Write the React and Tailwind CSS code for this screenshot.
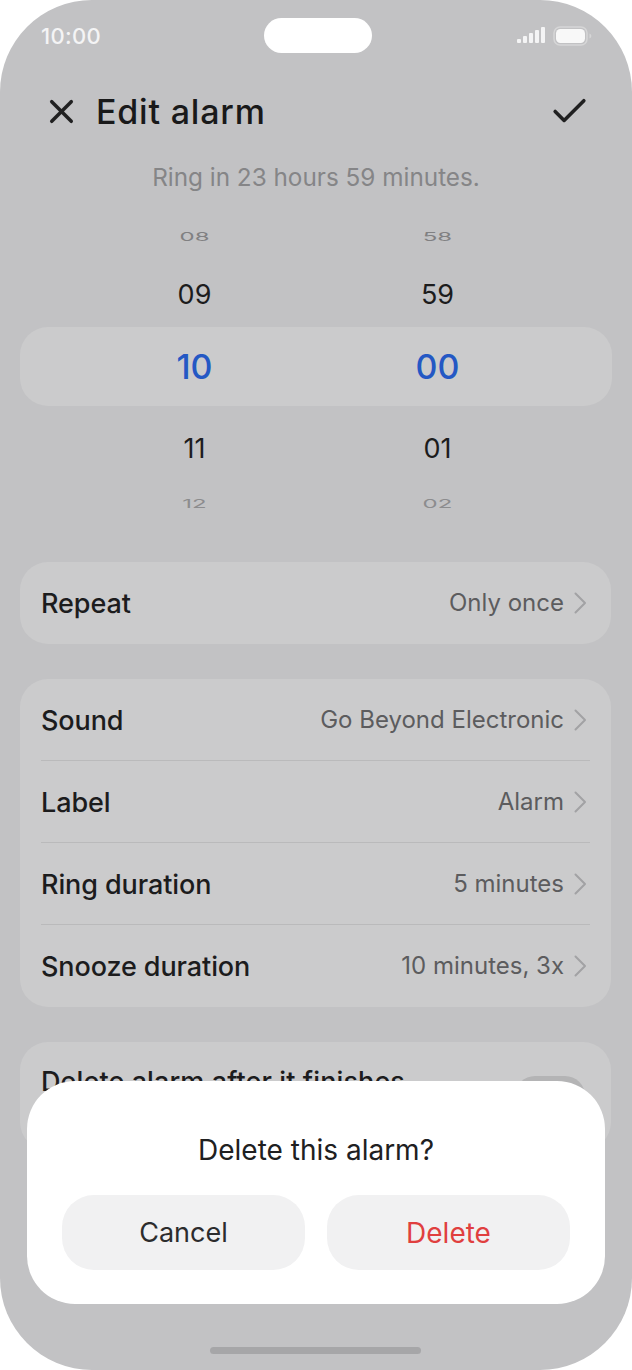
import { X, Check } from "lucide-react"

const font = { fontFamily: '"Inter", "Noto Sans", sans-serif' }

function StatusBar() {
    return (
        <div className="flex h-[71px] items-center justify-between pl-[41px] pr-[40px]">
            <span className="w-[120px] text-[22px] font-medium leading-none tracking-[0.3px] text-[#f4f4f5]">10:00</span>
            <div className="ml-[2px] h-[35px] w-[108px] rounded-full bg-white" />
            <div className="flex w-[120px] items-center justify-end gap-[8px]">
                <svg width="28" height="17" viewBox="0 0 28 17" fill="#f4f4f5">
                    <rect x="0" y="12" width="4" height="4" rx="1" />
                    <rect x="6" y="9" width="4" height="7" rx="1" />
                    <rect x="12" y="6" width="4" height="10" rx="1" />
                    <rect x="18" y="3" width="4" height="13" rx="1" />
                    <rect x="24" y="0" width="4" height="16" rx="1" />
                </svg>
                <svg width="39" height="20" viewBox="0 0 39 20" fill="none">
                    <rect x="1" y="1" width="33" height="18" rx="6" stroke="#d6d6d7" strokeWidth="1.5" />
                    <rect x="3" y="3" width="29" height="14" rx="4.5" fill="#f8f8f8" />
                    <path d="M36.5 7.5c1.2.4 1.8 1.3 1.8 2.5s-.6 2.1-1.8 2.5z" fill="#d6d6d7" />
                </svg>
            </div>
        </div>
    )
}

function PickerRow({ left, right, className }) {
    return (
        <div className={`flex pl-[73px] ${className}`}>
            <span className="w-[243px] text-center">{left}</span>
            <span className="w-[243px] text-center">{right}</span>
        </div>
    )
}

function Row({ label, value }) {
    return (
        <div className="flex h-[82px] items-center justify-between">
            <span className="pt-[3px] text-[27px] font-medium tracking-[-0.1px] text-[#1c1c1d]">{label}</span>
            <span className="flex items-center gap-[10px] text-[24px] text-[#5c5c5e]">
                {value}
                <svg width="13" height="22" viewBox="0 0 13 22" fill="none" className="mr-[3px]">
                    <path d="M1.5 1.5 11 11l-9.5 9.5" stroke="#a2a2a4" strokeWidth="2" strokeLinecap="round" strokeLinejoin="round" />
                </svg>
            </span>
        </div>
    )
}

export default function App() {
    return (
        <div className="relative h-[1370px] w-[632px] overflow-hidden bg-white" style={font}>
            <div className="h-full overflow-hidden rounded-[92px] bg-[#c2c2c4]">
                <StatusBar />

                <div className="mt-[14px] flex h-[52px] items-center pl-[42px] pr-[41px]">
                    <X size={39} strokeWidth={2.2} className="text-[#202021]" />
                    <h1 className="ml-[15px] flex-1 text-[34px] font-medium tracking-[0.8px] text-[#19191a]">Edit alarm</h1>
                    <Check size={43} strokeWidth={2} className="text-[#202021]" />
                </div>

                <p className="mt-[25px] text-center text-[24.3px] leading-[30px] text-[#858587]">Ring in 23 hours 59 minutes.</p>

                <div className="mt-[35px] text-[#1c1c1d]">
                    <PickerRow left="08" right="58" className="h-[20px] origin-center scale-y-[0.5] text-[24px] leading-[20px] text-[#808082]" />
                    <PickerRow left="09" right="59" className="mt-[33px] h-[30px] text-[27px] leading-[30px]" />
                    <div className="mx-[20px] mt-[17px] flex h-[79px] items-center rounded-[28px] bg-[#cbcbcc] pl-[53px] text-[34px] font-medium text-[#2458c4]">
                        <span className="w-[243px] text-center">10</span>
                        <span className="w-[243px] text-center">00</span>
                    </div>
                    <PickerRow left="11" right="01" className="mt-[28px] h-[30px] text-[27px] leading-[30px]" />
                    <PickerRow left="12" right="02" className="mt-[30px] h-[20px] scale-y-[0.5] text-[24px] leading-[20px] text-[#8c8c8e]" />
                </div>

                <div className="ml-[20px] mr-[21px] mt-[48px] flex flex-col gap-[35px]">
                    <div className="rounded-[28px] bg-[#cbcbcc] px-[21px]">
                        <Row label="Repeat" value="Only once" />
                    </div>
                    <div className="divide-y divide-[#bababb] rounded-[28px] bg-[#cbcbcc] px-[21px]">
                        <Row label="Sound" value="Go Beyond Electronic" />
                        <Row label="Label" value="Alarm" />
                        <Row label="Ring duration" value="5 minutes" />
                        <Row label="Snooze duration" value="10 minutes, 3x" />
                    </div>
                    <div className="flex h-[108px] items-start justify-between rounded-[28px] bg-[#cbcbcc] px-[21px] pt-[20px]">
                        <span className="text-[27px] font-medium tracking-[0.1px] text-[#1c1c1d]">Delete alarm after it finishes</span>
                        <div className="mr-[5px] mt-[14px] h-[40px] w-[70px] rounded-full bg-[#b4b4b5]" />
                    </div>
                </div>
            </div>

            {/* dialog sits over the list */}
            <div className="absolute bottom-[66px] left-[27px] h-[223px] w-[578px] rounded-[48px] bg-white px-[35px] pt-[52px]">
                <p className="text-center text-[28px] leading-[34px] text-[#202021]">Delete this alarm?</p>
                <div className="mt-[28px] flex gap-[22px]">
                    <button className="h-[75px] w-[243px] rounded-[32px] bg-[#f1f1f2] pt-[1px] text-[27px] text-[#2c2c2d]">Cancel</button>
                    <button className="h-[75px] w-[243px] rounded-[32px] bg-[#f1f1f2] text-[28px] text-[#e03f3f]">Delete</button>
                </div>
            </div>

            <div className="absolute bottom-[16px] left-[210px] h-[7px] w-[211px] rounded-full bg-[#a6a6a8]" />
        </div>
    )
}
